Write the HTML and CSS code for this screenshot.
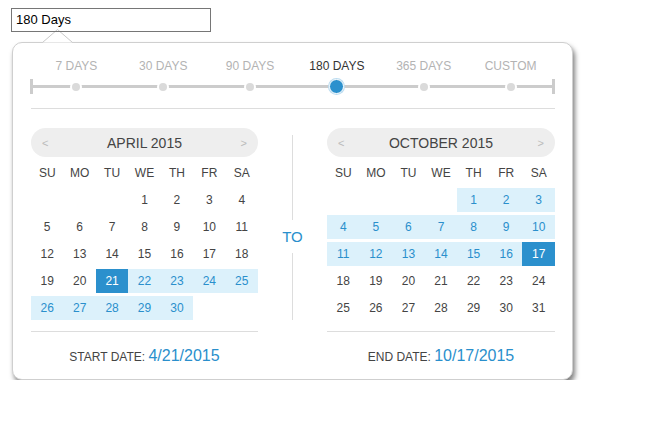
FILE: index.html
```html
<!DOCTYPE html>
<html>
<head>
<meta charset="utf-8">
<link rel="stylesheet" href="styles.css">
</head>
<body>
<div class="page">
  <div class="field">180 Days</div>
  <div class="popup">
    <svg class="arrow" width="31" height="15" viewBox="0 0 31 15">
      <polygon points="0.5,14.5 15.5,1.5 30.5,14.5" fill="#fff"/>
      <polyline points="0.5,14.5 15.5,1.5 30.5,14.5" fill="none" stroke="#c9c9c9" stroke-width="1"/>
    </svg>
    <div class="presets">
      <div class="opt"><span class="lbl">7 DAYS</span><span class="dotwrap"><span class="dot"></span></span></div>
      <div class="opt"><span class="lbl">30 DAYS</span><span class="dotwrap"><span class="dot"></span></span></div>
      <div class="opt"><span class="lbl">90 DAYS</span><span class="dotwrap"><span class="dot"></span></span></div>
      <div class="opt active"><span class="lbl">180 DAYS</span><span class="dotwrap"><span class="dot"></span></span></div>
      <div class="opt"><span class="lbl">365 DAYS</span><span class="dotwrap"><span class="dot"></span></span></div>
      <div class="opt"><span class="lbl">CUSTOM</span><span class="dotwrap"><span class="dot"></span></span></div>
    </div>
    <div class="rule top-rule"></div>
    <div class="cals">
      <div class="cal">
        <div class="cal-head"><span class="nav">&lt;</span><span class="title">APRIL 2015</span><span class="nav">&gt;</span></div>
        <div class="grid">
          <span class="dh">SU</span><span class="dh">MO</span><span class="dh">TU</span><span class="dh">WE</span><span class="dh">TH</span><span class="dh">FR</span><span class="dh">SA</span>
          <span></span><span></span><span></span><span>1</span><span>2</span><span>3</span><span>4</span>
          <span>5</span><span>6</span><span>7</span><span>8</span><span>9</span><span>10</span><span>11</span>
          <span>12</span><span>13</span><span>14</span><span>15</span><span>16</span><span>17</span><span>18</span>
          <span>19</span><span>20</span><span class="sel">21</span><span class="rng">22</span><span class="rng">23</span><span class="rng">24</span><span class="rng">25</span>
          <span class="rng">26</span><span class="rng">27</span><span class="rng">28</span><span class="rng">29</span><span class="rng">30</span><span></span><span></span>
        </div>
      </div>
      <div class="mid">
        <div class="vline l1"></div>
        <div class="to">TO</div>
        <div class="vline l2"></div>
      </div>
      <div class="cal">
        <div class="cal-head"><span class="nav">&lt;</span><span class="title">OCTOBER 2015</span><span class="nav">&gt;</span></div>
        <div class="grid">
          <span class="dh">SU</span><span class="dh">MO</span><span class="dh">TU</span><span class="dh">WE</span><span class="dh">TH</span><span class="dh">FR</span><span class="dh">SA</span>
          <span></span><span></span><span></span><span></span><span class="rng">1</span><span class="rng">2</span><span class="rng">3</span>
          <span class="rng">4</span><span class="rng">5</span><span class="rng">6</span><span class="rng">7</span><span class="rng">8</span><span class="rng">9</span><span class="rng">10</span>
          <span class="rng">11</span><span class="rng">12</span><span class="rng">13</span><span class="rng">14</span><span class="rng">15</span><span class="rng">16</span><span class="sel">17</span>
          <span>18</span><span>19</span><span>20</span><span>21</span><span>22</span><span>23</span><span>24</span>
          <span>25</span><span>26</span><span>27</span><span>28</span><span>29</span><span>30</span><span>31</span>
        </div>
      </div>
    </div>
    <div class="foot">
      <div class="foot-col">
        <div class="rule"></div>
        <div class="date">START DATE: <span class="val">4/21/2015</span></div>
      </div>
      <div class="foot-gap"></div>
      <div class="foot-col right">
        <div class="rule"></div>
        <div class="date">END DATE: <span class="val">10/17/2015</span></div>
      </div>
    </div>
  </div>
</div>
</body>
</html>
```
FILE: styles.css
```css
html, body {
  margin: 0;
  padding: 0;
  background: #fff;
  font-family: "Liberation Sans", Arial, sans-serif;
}
.page {
  padding: 8px 0 0 11px;
}
.field {
  position: relative;
  z-index: 2;
  box-sizing: border-box;
  width: 200px;
  height: 24px;
  border: 1px solid #767676;
  padding-left: 4px;
  font-size: 13px;
  line-height: 22px;
  color: #000;
  background: transparent;
}
.popup {
  position: relative;
  z-index: 1;
  box-sizing: border-box;
  width: 561px;
  height: 338px;
  margin: 10px 0 0 1px;
  padding: 0 17px 0 18px;
  border: 1px solid #cfcfcf;
  border-radius: 10px;
  background: #fff;
  box-shadow: 2px 4px 5px rgba(0, 0, 0, 0.5);
}
.arrow {
  position: absolute;
  left: 29px;
  top: -15px;
}
.presets {
  position: relative;
  display: grid;
  grid-template-columns: repeat(6, 1fr);
  padding: 16px 1px 0 2px;
}
.presets::before {
  content: "";
  position: absolute;
  left: 0;
  right: 0;
  top: 42px;
  height: 3px;
  background: #cccccc;
}
.presets::after {
  content: "";
  position: absolute;
  left: -1px;
  right: 0;
  top: 36px;
  height: 15px;
  box-sizing: border-box;
  border-left: 3px solid #cccccc;
  border-right: 3px solid #cccccc;
}
.opt {
  display: flex;
  flex-direction: column;
  align-items: center;
}
.lbl {
  font-size: 12px;
  line-height: 14px;
  color: #b3b3b3;
  white-space: nowrap;
}
.opt.active .lbl {
  color: #333;
}
.dotwrap {
  position: relative;
  z-index: 1;
  height: 15px;
  margin-top: 6px;
  display: flex;
  align-items: center;
  justify-content: center;
}
.dot {
  width: 8px;
  height: 8px;
  border-radius: 50%;
  background: #dadada;
  box-shadow: 0 0 0 2px #fff;
}
.opt.active .dot {
  box-sizing: border-box;
  width: 15px;
  height: 15px;
  background: #2b90cd;
  border: 1px solid #fff;
  box-shadow: 0 0 0 1px #bcdcf0;
}
.rule {
  height: 1px;
  background: #dddddd;
}
.top-rule {
  margin-top: 14px;
}
.cals {
  display: flex;
  margin-top: 19px;
}
.cal {
  width: 227px;
}
.cal + .mid + .cal {
  width: 228px;
}
.cal-head {
  height: 29px;
  border-radius: 15px;
  background: #eeeeee;
  display: flex;
  align-items: center;
  justify-content: space-between;
  padding: 0 11px;
}
.nav {
  font-size: 11px;
  color: #bbbbbb;
}
.title {
  font-size: 14px;
  color: #444;
}
.grid {
  margin-top: 4px;
  display: grid;
  grid-template-columns: repeat(7, 1fr);
  grid-auto-rows: 24px;
  row-gap: 3px;
}
.grid span {
  font-size: 12px;
  line-height: 24px;
  text-align: center;
  color: #444;
}
.grid .rng {
  background: #dcf1fb;
  color: #2a8fcc;
}
.grid .sel {
  background: #2b90cd;
  color: #fff;
}
.mid {
  flex: 1;
  display: flex;
  flex-direction: column;
  align-items: center;
  padding-top: 7px;
}
.vline {
  width: 1px;
  background: #dddddd;
}
.l1 {
  height: 85px;
}
.l2 {
  height: 67px;
}
.to {
  height: 33px;
  line-height: 33px;
  font-size: 15px;
  color: #2a8fcc;
}
.foot {
  display: flex;
  margin-top: 11px;
}
.foot-col {
  width: 227px;
}
.foot-col.right {
  width: 228px;
}
.foot-gap {
  flex: 1;
}
.date {
  margin-top: 14px;
  text-align: center;
  font-size: 12px;
  line-height: 20px;
  color: #444;
}
.date .val {
  font-size: 16px;
  color: #2a8fcc;
}
```
